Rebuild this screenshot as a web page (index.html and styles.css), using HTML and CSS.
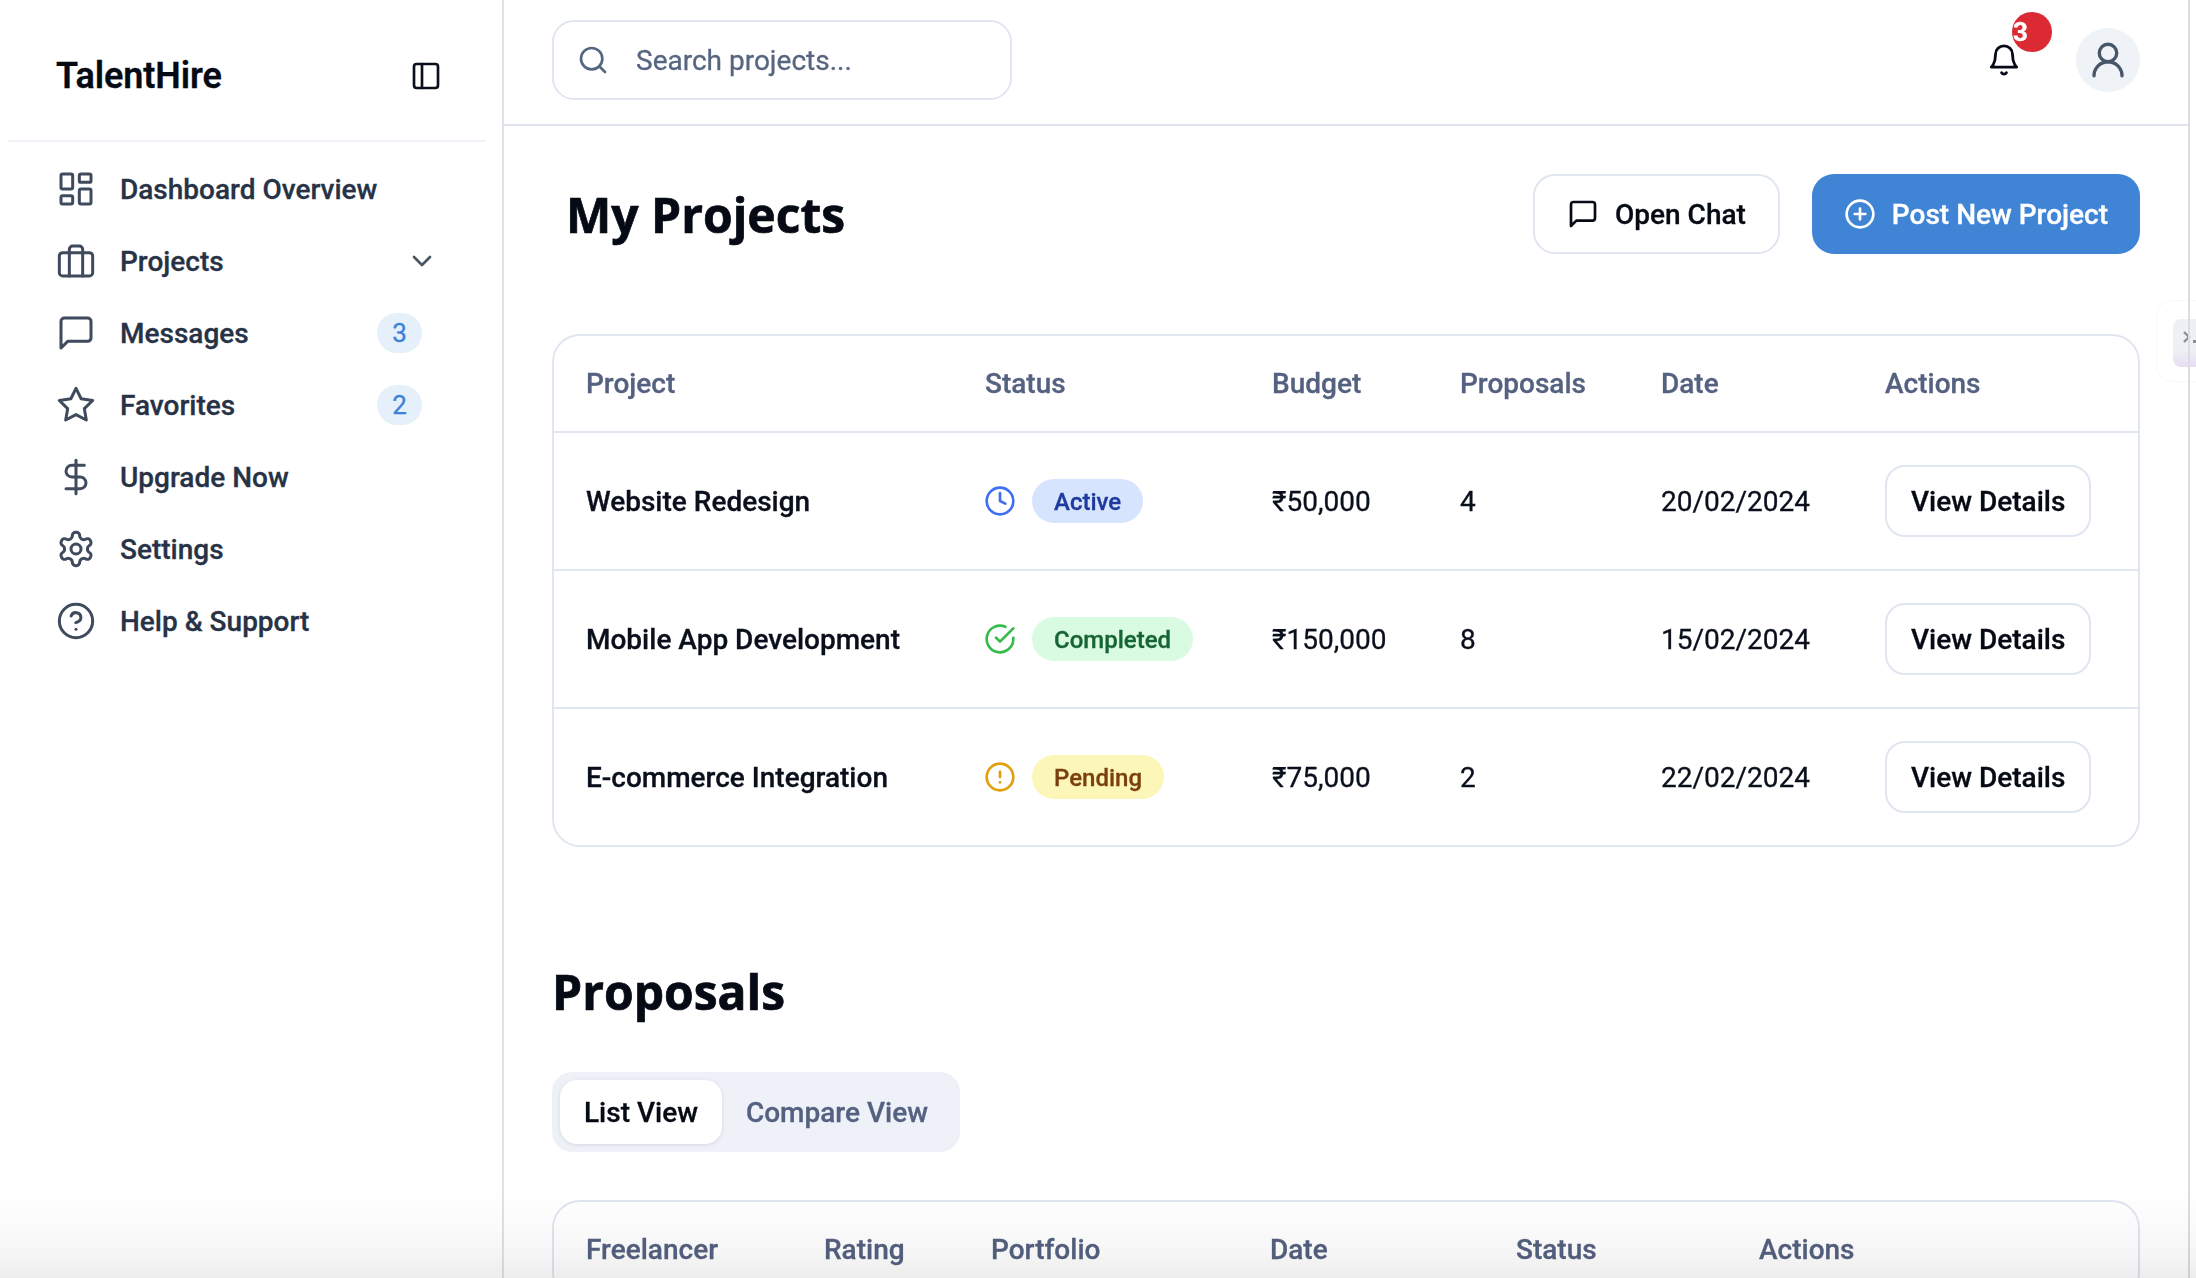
FILE: index.html
```html
<!DOCTYPE html>
<html lang="en">
<head>
    <meta charset="UTF-8">
    <title>TalentHire - My Projects</title>
    <link rel="stylesheet" href="styles.css">
</head>
<body>
    <div class="app">
        <aside class="sidebar">
            <div class="sidebar-header">
                <span class="logo">TalentHire</span>
                <svg class="icon toggle-icon" viewBox="0 0 24 24"><rect x="3" y="3" width="18" height="18" rx="2"/><path d="M9 3v18"/></svg>
            </div>
            <nav class="nav">
                <a class="nav-item">
                    <svg class="icon nav-icon" viewBox="0 0 24 24"><rect x="3" y="3" width="7" height="9" rx="1"/><rect x="14" y="3" width="7" height="5" rx="1"/><rect x="14" y="12" width="7" height="9" rx="1"/><rect x="3" y="16" width="7" height="5" rx="1"/></svg>
                    <span class="nav-label">Dashboard Overview</span>
                </a>
                <a class="nav-item">
                    <svg class="icon nav-icon" viewBox="0 0 24 24"><rect x="2" y="7" width="20" height="14" rx="2"/><path d="M16 21V5a2 2 0 0 0-2-2h-4a2 2 0 0 0-2 2v16"/></svg>
                    <span class="nav-label">Projects</span>
                    <svg class="icon chevron" viewBox="0 0 24 24"><path d="m6 9 6 6 6-6"/></svg>
                </a>
                <a class="nav-item">
                    <svg class="icon nav-icon" viewBox="0 0 24 24"><path d="M21 15a2 2 0 0 1-2 2H7l-4 4V5a2 2 0 0 1 2-2h14a2 2 0 0 1 2 2z"/></svg>
                    <span class="nav-label">Messages</span>
                    <span class="nav-count">3</span>
                </a>
                <a class="nav-item">
                    <svg class="icon nav-icon" viewBox="0 0 24 24"><polygon points="12 2 15.09 8.26 22 9.27 17 14.14 18.18 21.02 12 17.77 5.82 21.02 7 14.14 2 9.27 8.91 8.26 12 2"/></svg>
                    <span class="nav-label">Favorites</span>
                    <span class="nav-count">2</span>
                </a>
                <a class="nav-item">
                    <svg class="icon nav-icon" viewBox="0 0 24 24"><path d="M12 2v20"/><path d="M17 5H9.5a3.5 3.5 0 0 0 0 7h5a3.5 3.5 0 0 1 0 7H6"/></svg>
                    <span class="nav-label">Upgrade Now</span>
                </a>
                <a class="nav-item">
                    <svg class="icon nav-icon" viewBox="0 0 24 24"><path d="M12.22 2h-.44a2 2 0 0 0-2 2v.18a2 2 0 0 1-1 1.73l-.43.25a2 2 0 0 1-2 0l-.15-.08a2 2 0 0 0-2.73.73l-.22.38a2 2 0 0 0 .73 2.73l.15.1a2 2 0 0 1 1 1.72v.51a2 2 0 0 1-1 1.74l-.15.09a2 2 0 0 0-.73 2.73l.22.38a2 2 0 0 0 2.73.73l.15-.08a2 2 0 0 1 2 0l.43.25a2 2 0 0 1 1 1.73V20a2 2 0 0 0 2 2h.44a2 2 0 0 0 2-2v-.18a2 2 0 0 1 1-1.73l.43-.25a2 2 0 0 1 2 0l.15.08a2 2 0 0 0 2.73-.73l.22-.39a2 2 0 0 0-.73-2.73l-.15-.08a2 2 0 0 1-1-1.74v-.5a2 2 0 0 1 1-1.74l.15-.09a2 2 0 0 0 .73-2.73l-.22-.38a2 2 0 0 0-2.73-.73l-.15.08a2 2 0 0 1-2 0l-.43-.25a2 2 0 0 1-1-1.73V4a2 2 0 0 0-2-2z"/><circle cx="12" cy="12" r="3"/></svg>
                    <span class="nav-label">Settings</span>
                </a>
                <a class="nav-item">
                    <svg class="icon nav-icon" viewBox="0 0 24 24"><circle cx="12" cy="12" r="10"/><path d="M9.09 9a3 3 0 0 1 5.83 1c0 2-3 3-3 3"/><path d="M12 17h.01"/></svg>
                    <span class="nav-label">Help &amp; Support</span>
                </a>
            </nav>
        </aside>

        <main class="main">
            <header class="topbar">
                <div class="search">
                    <svg class="icon search-icon" viewBox="0 0 24 24"><circle cx="11" cy="11" r="8"/><path d="m21 21-4.3-4.3"/></svg>
                    <span class="search-text">Search projects...</span>
                </div>
                <div class="topbar-right">
                    <div class="bell">
                        <svg class="icon bell-icon" viewBox="0 0 24 24"><path d="M6 8a6 6 0 0 1 12 0c0 7 3 9 3 9H3s3-2 3-9"/><path d="M10.3 21a1.94 1.94 0 0 0 3.4 0"/></svg>
                        <span class="bell-badge">3</span>
                    </div>
                    <div class="avatar">
                        <svg class="icon avatar-icon" viewBox="0 0 24 24"><circle cx="12" cy="8" r="5"/><path d="M20 21a8 8 0 0 0-16 0"/></svg>
                    </div>
                </div>
            </header>

            <div class="content">
                <div class="page-head">
                    <h1 class="page-title">My Projects</h1>
                    <div class="page-actions">
                        <button class="btn btn-outline">
                            <svg class="icon" viewBox="0 0 24 24"><path d="M21 15a2 2 0 0 1-2 2H7l-4 4V5a2 2 0 0 1 2-2h14a2 2 0 0 1 2 2z"/></svg>
                            Open Chat
                        </button>
                        <button class="btn btn-primary">
                            <svg class="icon" viewBox="0 0 24 24"><circle cx="12" cy="12" r="10"/><path d="M8 12h8"/><path d="M12 8v8"/></svg>
                            Post New Project
                        </button>
                    </div>
                </div>

                <div class="table-card">
                    <table class="data-table projects-table">
                        <thead>
                            <tr>
                                <th>Project</th>
                                <th>Status</th>
                                <th>Budget</th>
                                <th>Proposals</th>
                                <th>Date</th>
                                <th>Actions</th>
                            </tr>
                        </thead>
                        <tbody>
                            <tr>
                                <td class="project-name">Website Redesign</td>
                                <td>
                                    <div class="status">
                                        <svg class="icon status-icon blue" viewBox="0 0 24 24"><circle cx="12" cy="12" r="10"/><path d="M12 6v6l4 2"/></svg>
                                        <span class="pill pill-active">Active</span>
                                    </div>
                                </td>
                                <td>₹50,000</td>
                                <td>4</td>
                                <td>20/02/2024</td>
                                <td><button class="btn-details">View Details</button></td>
                            </tr>
                            <tr>
                                <td class="project-name">Mobile App Development</td>
                                <td>
                                    <div class="status">
                                        <svg class="icon status-icon green" viewBox="0 0 24 24"><path d="M22 11.08V12a10 10 0 1 1-5.93-9.14"/><path d="M22 4 12 14.01l-3-3"/></svg>
                                        <span class="pill pill-completed">Completed</span>
                                    </div>
                                </td>
                                <td>₹150,000</td>
                                <td>8</td>
                                <td>15/02/2024</td>
                                <td><button class="btn-details">View Details</button></td>
                            </tr>
                            <tr>
                                <td class="project-name">E-commerce Integration</td>
                                <td>
                                    <div class="status">
                                        <svg class="icon status-icon yellow" viewBox="0 0 24 24"><circle cx="12" cy="12" r="10"/><path d="M12 8v4"/><path d="M12 16h.01"/></svg>
                                        <span class="pill pill-pending">Pending</span>
                                    </div>
                                </td>
                                <td>₹75,000</td>
                                <td>2</td>
                                <td>22/02/2024</td>
                                <td><button class="btn-details">View Details</button></td>
                            </tr>
                        </tbody>
                    </table>
                </div>

                <h2 class="section-title">Proposals</h2>

                <div class="tabs">
                    <span class="tab tab-current">List View</span>
                    <span class="tab">Compare View</span>
                </div>

                <div class="table-card">
                    <table class="data-table proposals-table">
                        <thead>
                            <tr>
                                <th>Freelancer</th>
                                <th>Rating</th>
                                <th>Portfolio</th>
                                <th>Date</th>
                                <th>Status</th>
                                <th>Actions</th>
                            </tr>
                        </thead>
                    </table>
                </div>
            </div>
        </main>
    </div>

    <div class="side-widget">
        <div class="side-widget-inner">
            <svg class="widget-chevron" viewBox="0 0 10 14"><path d="M2 2l5 5-5 5"/></svg>
            <span class="widget-dot"></span>
        </div>
    </div>
    <div class="bottom-fade"></div>
</body>
</html>
```

FILE: styles.css
```css
* {
    box-sizing: border-box;
}
html, body {
    margin: 0;
    height: 100%;
    overflow: hidden;
    background: #fff;
}
body {
    font-family: Roboto, "Liberation Sans", sans-serif;
    font-size: 28px;
    color: #0a0f1c;
    -webkit-text-stroke: 0.3px;
}
.app {
    display: flex;
    height: 100vh;
    width: 2190px;
}
.icon {
    width: 32px;
    height: 32px;
    flex: none;
    fill: none;
    stroke: currentColor;
    stroke-width: 2;
    stroke-linecap: round;
    stroke-linejoin: round;
}

/* sidebar */
.sidebar {
    width: 504px;
    flex: none;
    border-right: 2px solid #dfe2eb;
}
.sidebar-header {
    height: 142px;
    margin: 0 16px 0 8px;
    padding: 0 44px 0 48px;
    display: flex;
    align-items: center;
    justify-content: space-between;
    border-bottom: 2px solid #f0f2f7;
}
.logo {
    font-size: 36px;
    font-weight: 600;
    letter-spacing: -0.1px;
    color: #050a14;
    margin-top: 12px;
}
.toggle-icon {
    color: #0a0f1c;
    margin-top: 12px;
}
.nav {
    padding: 11px 64px 0 56px;
}
.nav-item {
    display: flex;
    align-items: center;
    height: 72px;
    gap: 24px;
    font-weight: 500;
    color: #273246;
}
.nav-icon {
    width: 40px;
    height: 40px;
    stroke-width: 1.8;
    color: #3f4a5c;
}
.nav-label {
    flex: 1;
}
.chevron {
    color: #4b5563;
    margin-left: -6px;
}
.nav-count {
    width: 45px;
    height: 40px;
    margin-right: 16px;
    border-radius: 20px;
    background: #e6f0fb;
    color: #3b82d9;
    font-size: 26px;
    font-weight: 400;
    display: flex;
    align-items: center;
    justify-content: center;
}

/* topbar */
.main {
    flex: 1;
    min-width: 0;
    position: relative;
    z-index: 1;
    border-right: 2px solid #dcdce2;
}
.topbar {
    height: 126px;
    padding: 0 48px 4px 48px;
    border-bottom: 2px solid #e0e4ee;
    display: flex;
    align-items: center;
    justify-content: space-between;
}
.search {
    width: 460px;
    height: 80px;
    padding-left: 23px;
    border: 2px solid #e0e6f0;
    border-radius: 22px;
    display: flex;
    align-items: center;
    gap: 27px;
}
.search-icon {
    color: #556680;
}
.search-text {
    color: #566580;
}
.topbar-right {
    display: flex;
    align-items: center;
    gap: 54px;
}
.bell {
    position: relative;
    width: 36px;
    height: 36px;
    display: flex;
    align-items: center;
    justify-content: center;
}
.bell-icon {
    color: #050a14;
    width: 34px;
    height: 34px;
}
.bell-badge {
    position: absolute;
    left: 26px;
    top: -30px;
    width: 40px;
    height: 40px;
    padding-left: 1px;
    border-radius: 50%;
    background: #dc2a34;
    color: #fff;
    font-size: 26px;
    font-weight: 700;
    line-height: 41px;
}
.avatar {
    width: 64px;
    height: 64px;
    border-radius: 50%;
    background: #eff2f7;
    display: flex;
    align-items: center;
    justify-content: center;
}
.avatar-icon {
    width: 42px;
    height: 42px;
    stroke-width: 1.9;
    color: #475569;
}

/* page */
.content {
    padding: 48px 48px 0 48px;
}
.page-head {
    display: flex;
    align-items: center;
    justify-content: space-between;
    height: 80px;
    padding-left: 14px;
    margin-bottom: 80px;
}
.page-title, .section-title {
    margin: 0;
    font-family: "Open Sans", "Liberation Sans", sans-serif;
    font-size: 48px;
    font-weight: 700;
    color: #050a14;
    -webkit-text-stroke: 0.7px;
}
.page-actions {
    display: flex;
    gap: 32px;
}
.btn {
    height: 80px;
    padding: 0 32px;
    display: flex;
    align-items: center;
    gap: 16px;
    border-radius: 22px;
    font-family: inherit;
    font-size: 28px;
    font-weight: 500;
}
.btn-outline {
    background: #fff;
    border: 2px solid #e0e6f0;
    color: #050a14;
}
.btn-primary {
    background: #4084d6;
    border: none;
    color: #fff;
}

/* tables */
.table-card {
    border: 2px solid #e0e6f0;
    border-radius: 28px;
    overflow: hidden;
}
.data-table {
    width: 100%;
    table-layout: fixed;
    border-collapse: separate;
    border-spacing: 0;
}
.data-table th {
    height: 97px;
    padding: 0 0 0 32px;
    text-align: left;
    font-weight: 500;
    color: #556180;
    border-bottom: 2px solid #e0e6f0;
}
.data-table td {
    height: 138px;
    padding: 0 0 0 32px;
    border-bottom: 2px solid #e0e6f0;
}
.data-table tr:last-child td {
    height: 136px;
    border-bottom: none;
}
.projects-table th:nth-child(1) { width: 399px; }
.projects-table th:nth-child(2) { width: 287px; }
.projects-table th:nth-child(3) { width: 188px; }
.projects-table th:nth-child(4) { width: 201px; }
.projects-table th:nth-child(5) { width: 224px; }
.proposals-table th:nth-child(1) { width: 238px; }
.proposals-table th:nth-child(2) { width: 167px; }
.proposals-table th:nth-child(3) { width: 279px; }
.proposals-table th:nth-child(4) { width: 246px; }
.proposals-table th:nth-child(5) { width: 243px; }
.project-name {
    font-weight: 500;
    white-space: nowrap;
}
.status {
    display: flex;
    align-items: center;
    gap: 16px;
    margin-left: -1px;
}
.status-icon.blue { color: #3f6ff0; }
.status-icon.green { color: #34bb4a; }
.status-icon.yellow { color: #dfa00c; }
.pill {
    height: 44px;
    padding: 1px 22px 0;
    border-radius: 22px;
    display: flex;
    align-items: center;
    font-size: 24px;
    font-weight: 500;
}
.pill-active { background: #d6e4fd; color: #1e3a9e; }
.pill-completed { background: #d9fbe2; color: #166534; }
.pill-pending { background: #fcf6b8; color: #7a3f0c; }
.btn-details {
    height: 72px;
    padding: 0 24px;
    background: #fff;
    border: 2px solid #e0e6f0;
    border-radius: 20px;
    font-family: inherit;
    font-size: 28px;
    font-weight: 500;
    color: #050a14;
}

/* proposals */
.section-title {
    margin-top: 116px;
    line-height: 58px;
}
.tabs {
    display: inline-flex;
    margin: 51px 0 48px;
    padding: 8px;
    height: 80px;
    background: #eef1f7;
    border-radius: 20px;
    vertical-align: top;
}
.tab {
    height: 64px;
    padding: 0 24px;
    display: flex;
    align-items: center;
    font-weight: 500;
    color: #556180;
    border-radius: 17px;
}
.tab-current {
    background: #fff;
    color: #050a14;
    box-shadow: 0 1px 4px rgba(0, 0, 0, 0.1);
}

/* bits that sit over the page */
.side-widget {
    position: fixed;
    left: 2156px;
    top: 300px;
    width: 60px;
    height: 82px;
    padding: 18px 0 0 16px;
    background: #fff;
    border: 1px solid #f8f8fa;
    border-radius: 16px;
}
.side-widget-inner {
    position: relative;
    width: 40px;
    height: 48px;
    background: linear-gradient(#eff0f5 65%, #e6dcf3);
    border-radius: 8px;
}
.widget-chevron {
    position: absolute;
    left: 9px;
    top: 11px;
    width: 10px;
    height: 14px;
    fill: none;
    stroke: #8d8d94;
    stroke-width: 2.4;
}
.widget-dot {
    position: absolute;
    left: 20px;
    top: 21px;
    width: 3px;
    height: 3px;
    background: #8d8d94;
}
.bottom-fade {
    position: fixed;
    left: 0;
    right: 0;
    bottom: 0;
    height: 90px;
    z-index: 2;
    pointer-events: none;
    background: linear-gradient(rgba(0, 0, 0, 0), rgba(0, 0, 0, 0.015) 40%, rgba(0, 0, 0, 0.035) 70%, rgba(0, 0, 0, 0.07));
}
```
